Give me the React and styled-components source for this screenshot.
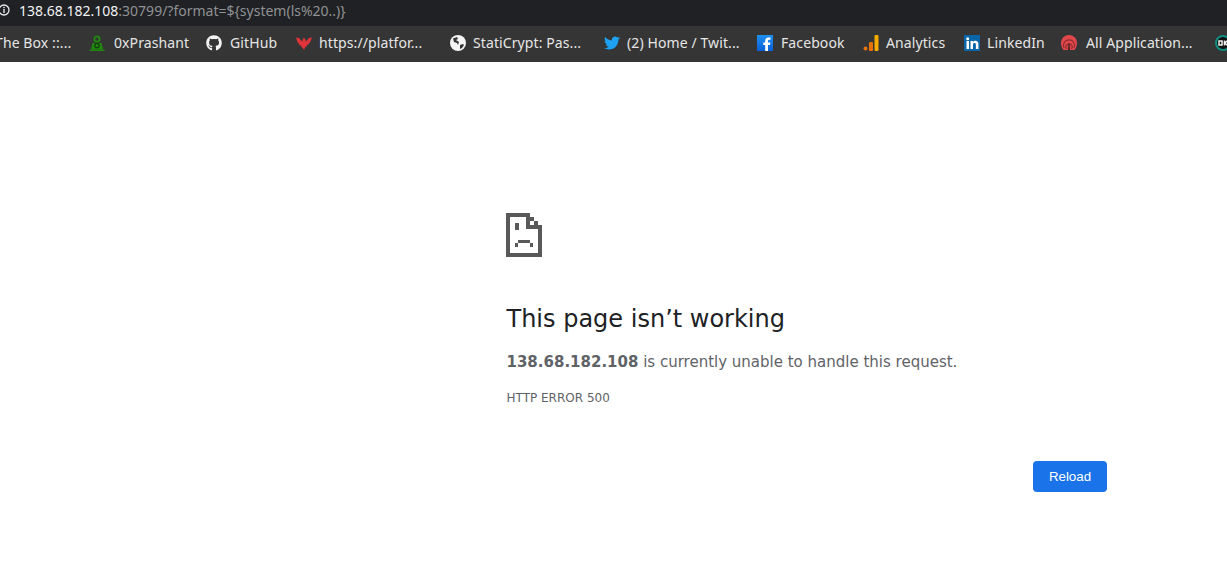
import React from "react"
import styled, { createGlobalStyle } from "styled-components"
import { FaGithub, FaTwitter } from "react-icons/fa"

const GlobalStyle = createGlobalStyle`
  html, body {
    margin: 0;
    background: #fff;
  }
`

const Page = styled.div`
  width: 1227px;
  height: 566px;
  overflow: hidden;
  display: flex;
  flex-direction: column;
`

const AddressBar = styled.div`
  box-sizing: border-box;
  height: 26px;
  flex: none;
  background: #202124;
  display: flex;
  align-items: center;
  padding-bottom: 6px;
  font: 14px "Noto Sans", sans-serif;
  color: #8f9194;
  white-space: nowrap;
`

const Host = styled.span`
  color: #f1f3f4;
`

const InfoIcon = styled.svg`
  width: 12px;
  height: 12px;
  margin: 0 9px 0 -2px;
  flex: none;
`

const Bookmarks = styled.div`
  box-sizing: border-box;
  height: 36px;
  flex: none;
  background: #353535;
  display: flex;
  align-items: center;
  padding-bottom: 3px;
  overflow: hidden;
  font: 14px "Noto Sans", sans-serif;
  letter-spacing: 0.1px;
  color: #e6e6e6;
  white-space: nowrap;
`

const Bookmark = styled.div`
  flex: none;
  width: ${(p) => p.$width}px;
  margin-left: ${(p) => p.$offset || 0}px;
  display: flex;
  align-items: center;
  gap: ${(p) => p.$gap || 7}px;

  svg {
    width: 16px;
    height: 16px;
    flex: none;
  }
`

const Main = styled.main`
  flex: 1;
  padding: 151px 120px 0 506px;
  font-family: "DejaVu Sans", sans-serif;
`

const SadFile = styled.svg`
  display: block;
  width: 36px;
  height: 44px;
  shape-rendering: crispEdges;
`

const Title = styled.h1`
  margin: 47px 0 0 0.5px;
  font-size: 24px;
  line-height: 30px;
  font-weight: 400;
  color: #202124;
`

const Message = styled.p`
  margin: 18px 0 0 0.5px;
  font-size: 15px;
  line-height: 20px;
  color: #5f6368;

  strong {
    font-weight: 700;
  }
`

const ErrorCode = styled.div`
  margin: 18px 0 0 0.5px;
  font-size: 12px;
  line-height: 16px;
  color: #5f6368;
`

const Actions = styled.div`
  margin-top: 55px;
  display: flex;
  justify-content: flex-end;
`

const ReloadButton = styled.button`
  width: 74px;
  height: 31px;
  padding: 0;
  border: 0;
  border-radius: 4px;
  background: #1a73e8;
  color: #fff;
  font: 13.33px "Liberation Sans", sans-serif;
`

const HtbIcon = () => (
  <svg viewBox="0 0 16 16" fill="none" stroke="#1f8a0e">
    <circle cx="8" cy="4" r="2.600" strokeWidth="1.800" />
    <path fill="#1f8a0e" stroke="none" d="M3.500 8h9l1.500 6.500H2z" />
    <circle cx="8" cy="10.500" r="2.200" stroke="#123f0a" strokeWidth="1.300" />
    <path strokeWidth="1.400" d="M0.500 15.300h15" />
  </svg>
)

const VulnIcon = () => (
  <svg viewBox="0 0 16 16" fill="#e0343a">
    <path d="M0 2.500l3 .5 3 3.500L7 4l1-1.500L9 4l1 2.500L13 3l3-.5-1.500 4-1 .2.800.8-1.800 1 .3 1-2.300.6.500 1.400-1.500.3L8 15l-1.500-2.600-1.500-.3.500-1.400-2.300-.6.300-1-1.800-1 .8-.8-1-.2z" />
  </svg>
)

const GlobeIcon = () => (
  <svg viewBox="0 0 16 16">
    <circle cx="8" cy="8" r="8" fill="#f4f4f4" />
    <path fill="#353535" d="M7 2L3 3.500 4 7l3 1 1 2 1-3-3-2 2-1zM10 10l3-1 1 1-2 3-2 1z" />
  </svg>
)

const FacebookIcon = () => (
  <svg viewBox="0 0 16 16">
    <defs>
      <linearGradient id="fb" x1="0" y1="0" x2="0" y2="1">
        <stop offset="0" stopColor="#1f8fef" />
        <stop offset="1" stopColor="#0a5fd8" />
      </linearGradient>
    </defs>
    <rect width="16" height="16" fill="url(#fb)" />
    <path fill="#fff" d="M11 16v-6h2l.4-2.500H11V6c0-.8.4-1.200 1.200-1.200h1.300V2.500H11.500C9.300 2.500 8.200 3.800 8.200 5.800v1.700H6.300V10h1.900v6z" />
  </svg>
)

const AnalyticsIcon = () => (
  <svg viewBox="0 0 16 16">
    <circle cx="2.500" cy="13.500" r="2" fill="#e8710a" />
    <rect x="6" y="7" width="4" height="9" rx="1" fill="#e8710a" />
    <rect x="11.500" y="0" width="4" height="16" rx="1" fill="#f9ab00" />
  </svg>
)

const LinkedinIcon = () => (
  <svg viewBox="0 0 16 16">
    <rect width="16" height="16" fill="#0a66a8" />
    <rect x="2.500" y="6" width="2.500" height="8" fill="#fff" />
    <circle cx="3.700" cy="3.700" r="1.500" fill="#fff" />
    <path fill="#fff" d="M6.500 6H9v1.100c.5-.8 1.300-1.300 2.400-1.300 2 0 3 1.200 3 3.400V14h-2.500V9.700c0-1.100-.4-1.700-1.300-1.700S9 8.600 9 9.700V14H6.500z" />
  </svg>
)

const AppsIcon = () => (
  <svg viewBox="0 0 16 16" fill="none">
    <path fill="#e0484c" d="M0 8a8 8 0 0 1 16 0c0 3-1 5-2.500 7H2.500C1 13 0 11 0 8z" />
    <path stroke="#8f2b2e" strokeWidth="1.100" d="M3 13a5.600 5.600 0 1 1 10 0M5.500 14a3.200 3.200 0 1 1 5 0" />
    <path fill="#4a2324" d="M7 15l.3-6h1.400l.3 6z" />
  </svg>
)

const OkIcon = () => (
  <svg viewBox="0 0 16 16">
    <circle cx="8" cy="8" r="7" fill="#111" stroke="#0f8f80" strokeWidth="2" />
    <path fill="none" stroke="#eee" strokeWidth="1.500" d="M4 6h3v4H4zM9.500 5.500v5M13 5.500l-3.500 2.500 3.500 2.500" />
  </svg>
)

const App = () => (
  <>
    <GlobalStyle />
    <Page>
      <AddressBar>
        <InfoIcon viewBox="0 0 12 12">
          <circle cx="6" cy="6" r="5" fill="none" stroke="#e8eaed" strokeWidth="1.300" />
          <rect x="5.300" y="5" width="1.400" height="4" fill="#e8eaed" />
          <rect x="5.300" y="2.800" width="1.400" height="1.400" fill="#e8eaed" />
        </InfoIcon>
        <Host>138.68.182.108</Host>:30799/?format=${"{"}system(ls%20..){"}"}
      </AddressBar>
      <Bookmarks>
        <Bookmark $width={94} $offset={-5}>The Box ::...</Bookmark>
        <Bookmark $width={117} $gap={9}><HtbIcon />0xPrashant</Bookmark>
        <Bookmark $width={90} $gap={8}><FaGithub color="#f4f4f4" />GitHub</Bookmark>
        <Bookmark $width={154}><VulnIcon />https://platfor...</Bookmark>
        <Bookmark $width={154}><GlobeIcon />StatiCrypt: Pas...</Bookmark>
        <Bookmark $width={153}><FaTwitter color="#1da1f2" />(2) Home / Twit...</Bookmark>
        <Bookmark $width={106} $gap={8}><FacebookIcon />Facebook</Bookmark>
        <Bookmark $width={101}><AnalyticsIcon />Analytics</Bookmark>
        <Bookmark $width={97}><LinkedinIcon />LinkedIn</Bookmark>
        <Bookmark $width={154} $gap={9}><AppsIcon />All Application...</Bookmark>
        <Bookmark $width={20}><OkIcon /></Bookmark>
      </Bookmarks>
      <Main>
        <SadFile viewBox="0 0 36 44" fill="#595959">
          <path d="M0 0h24v4H4v36h28V16h4v28H0z" />
          <path d="M20 0h4v12h12v4H20zM24 4h4v4h-4zM28 8h4v4h-4z" />
          <path d="M9 10h4v7H9zM12 27h12v3H12zM9 30h3v4H9zM24 30h3v4h-3z" />
        </SadFile>
        <Title>This page isn’t working</Title>
        <Message><strong>138.68.182.108</strong> is currently unable to handle this request.</Message>
        <ErrorCode>HTTP ERROR 500</ErrorCode>
        <Actions>
          <ReloadButton>Reload</ReloadButton>
        </Actions>
      </Main>
    </Page>
  </>
)

export default App
